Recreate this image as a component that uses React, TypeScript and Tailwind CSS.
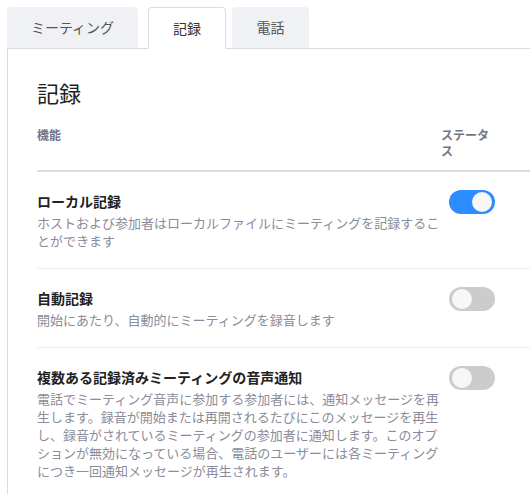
import React from "react";

const rows = [
  {
    title: "ローカル記録",
    desc: "ホストおよび参加者はローカルファイルにミーティングを記録することができます",
    on: true,
  },
  {
    title: "自動記録",
    desc: "開始にあたり、自動的にミーティングを録音します",
    on: false,
  },
  {
    title: "複数ある記録済みミーティングの音声通知",
    desc: "電話でミーティング音声に参加する参加者には、通知メッセージを再生します。録音が開始または再開されるたびにこのメッセージを再生し、録音がされているミーティングの参加者に通知します。このオプションが無効になっている場合、電話のユーザーには各ミーティングにつき一回通知メッセージが再生されます。",
    on: false,
  },
];

function Toggle({ on }: { on: boolean }) {
  return (
    <div
      className={
        "relative w-[46px] h-[24px] rounded-full " +
        (on ? "bg-[#2d8cff]" : "bg-[#cccccc]")
      }
    >
      <div
        className={
          "absolute top-[2px] w-[20px] h-[20px] rounded-full bg-[#f7f7f7] " +
          (on ? "right-[3px]" : "left-[3px]")
        }
      />
    </div>
  );
}

export default function App() {
  return (
    <div
      className="w-[530px] h-[494px] overflow-hidden bg-white pt-[7px] pl-[7px]"
      style={{ fontFamily: '"Noto Sans CJK JP", "Noto Sans", sans-serif' }}
    >
      {/* Tabs */}
      <div className="flex items-end h-[41px]">
        <div className="w-[131px] h-[41px] flex items-center justify-center bg-[#f0f1f4] rounded-t-[4px] text-[14px] text-[#555]">
          ミーティング
        </div>
        <div className="relative z-10 ml-[10px] w-[78px] h-[42px] -mb-px flex items-center justify-center bg-white border border-[#dcdcdc] border-b-white rounded-t-[4px] text-[14px] text-[#333]">
          記録
        </div>
        <div className="ml-[6px] w-[77px] h-[41px] flex items-center justify-center bg-[#f0f1f4] rounded-t-[4px] text-[14px] text-[#555]">
          電話
        </div>
      </div>

      {/* Panel */}
      <div className="border-l border-t border-[#dcdcdc] pl-[29px] pt-[27px] h-[460px]">
        <h2 className="text-[22px] leading-[32px] text-[#222]">記録</h2>

        <div className="w-[560px] mt-[19px]">
          {/* Header */}
          <div className="flex items-start border-b-2 border-[#dddddd] pb-[11px] text-[12px] leading-[16px] font-bold text-[#747487]">
            <div className="w-[404px]">機能</div>
            <div className="w-[52px]">ステータス</div>
          </div>

          {rows.map((r, i) => (
            <div
              key={i}
              className={
                "flex items-start pt-[18px] pb-[18px] " +
                (i < rows.length - 1 ? "border-b border-[#ededed]" : "")
              }
            >
              <div className="w-[404px] pt-[1px]">
                <div className="text-[14px] leading-[20px] font-bold text-[#222]">
                  {r.title}
                </div>
                <div className="mt-[3px] text-[13px] leading-[18px] text-[#8b8b9b]">
                  {r.desc}
                </div>
              </div>
              <div className="ml-[8px]">
                <Toggle on={r.on} />
              </div>
            </div>
          ))}
        </div>
      </div>
    </div>
  );
}
